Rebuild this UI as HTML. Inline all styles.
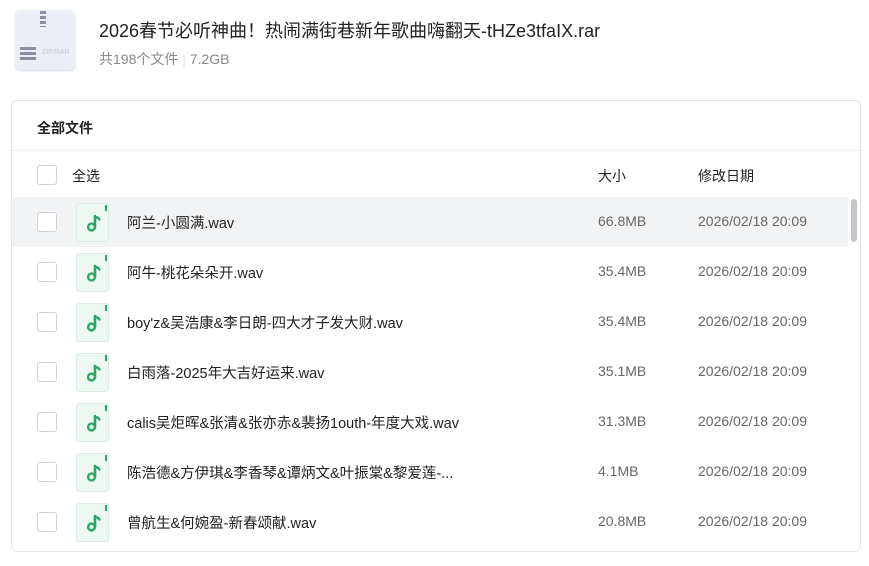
<!DOCTYPE html>
<html><head><meta charset="utf-8"><style>
body{margin:0;width:869px;height:566px;background:#fff;font-family:"Liberation Sans","Noto Sans CJK SC",sans-serif;position:relative;overflow:hidden;color:#222}
.abs{position:absolute}
.card{left:11px;top:100px;width:848px;height:450px;border:1px solid #e3e5e8;border-radius:6px;overflow:hidden}
.row{position:absolute;left:0;width:836px;height:50px}
.cb{position:absolute;left:25px;top:15px;width:18px;height:18px;border:1px solid #cfd2d6;border-radius:3px;background:#fff}
.fi{position:absolute;left:64px;top:6px;width:31px;height:37px;background:#eef8f2;border:1px solid #dcebe3;border-radius:3px}
.fi:after{content:"";position:absolute;right:1px;top:1px;width:2px;height:6px;background:#2aa862}
.nm{position:absolute;left:115px;top:15px;font-size:14.5px;color:#222}
.sz{position:absolute;left:586px;top:16px;font-size:14px;color:#666}
.dt{position:absolute;left:686px;top:16px;font-size:14px;color:#666}
</style></head><body>
<div class="abs" style="left:15px;top:10px;width:60px;height:60px;background:#eceef6;border-radius:5px;box-shadow:0 1px 2px #d8dae3"></div>
<div class="abs" style="left:40px;top:11px;width:6px;height:16px;background:repeating-linear-gradient(#8b8fa3 0 3px,transparent 3px 5px)"></div>
<div class="abs" style="left:20px;top:47px;width:16px;height:14px;background:repeating-linear-gradient(#8b8fa3 0 3px,transparent 3px 5px)"></div>
<div class="abs" style="left:42px;top:49px;font-size:7px;color:#c4c7d4">ZIP/RAR</div>
<div class="abs" style="left:99px;top:17px;font-size:18px;color:#222">2026春节必听神曲！热闹满街巷新年歌曲嗨翻天-tHZe3tfaIX.rar</div>
<div class="abs" style="left:99px;top:49px;font-size:14px;color:#888">共198个文件 <span style="color:#ddd">|</span> 7.2GB</div>
<div class="abs card">
<div class="abs" style="left:25px;top:17px;font-size:14px;font-weight:bold;color:#222">全部文件</div>
<div class="abs" style="left:0;top:49px;width:848px;height:1px;background:#eceef0"></div>
<div class="row" style="top:49px"><div class="cb"></div><div class="abs" style="left:60px;top:16px;font-size:14px">全选</div><div class="sz" style="color:#222">大小</div><div class="dt" style="color:#222">修改日期</div></div>
<div class="abs" style="left:839px;top:98px;width:6px;height:43px;background:#c4c6ca;border-radius:3px"></div>
<div id="rows"></div>
</div>
<script>
var d=[["阿兰-小圆满.wav","66.8MB"],["阿牛-桃花朵朵开.wav","35.4MB"],["boy'z&吴浩康&李日朗-四大才子发大财.wav","35.4MB"],["白雨落-2025年大吉好运来.wav","35.1MB"],["calis吴炬晖&张清&张亦赤&裴扬1outh-年度大戏.wav","31.3MB"],["陈浩德&方伊琪&李香琴&谭炳文&叶振棠&黎爱莲-...","4.1MB"],["曾航生&何婉盈-新春颂献.wav","20.8MB"]];
var h="";d.forEach(function(r,i){h+='<div class="row" style="top:'+(96+i*50)+'px;'+(i==0?'background:#f2f3f5':'')+'"><div class="cb"></div><div class="fi"><svg width="31" height="37" viewBox="0 0 31 37"><path d="M18 12v11" stroke="#2aa862" stroke-width="2.6" fill="none" stroke-linecap="round"/><path d="M18 13q3 0 4.5 2.5" stroke="#2aa862" stroke-width="2.4" fill="none" stroke-linecap="round"/><circle cx="14.5" cy="23" r="3.4" stroke="#2aa862" stroke-width="2.4" fill="none"/></svg></div><div class="nm">'+r[0]+'</div><div class="sz">'+r[1]+'</div><div class="dt">2026/02/18 20:09</div></div>'});
document.getElementById("rows").innerHTML=h;
</script>
</body></html>
